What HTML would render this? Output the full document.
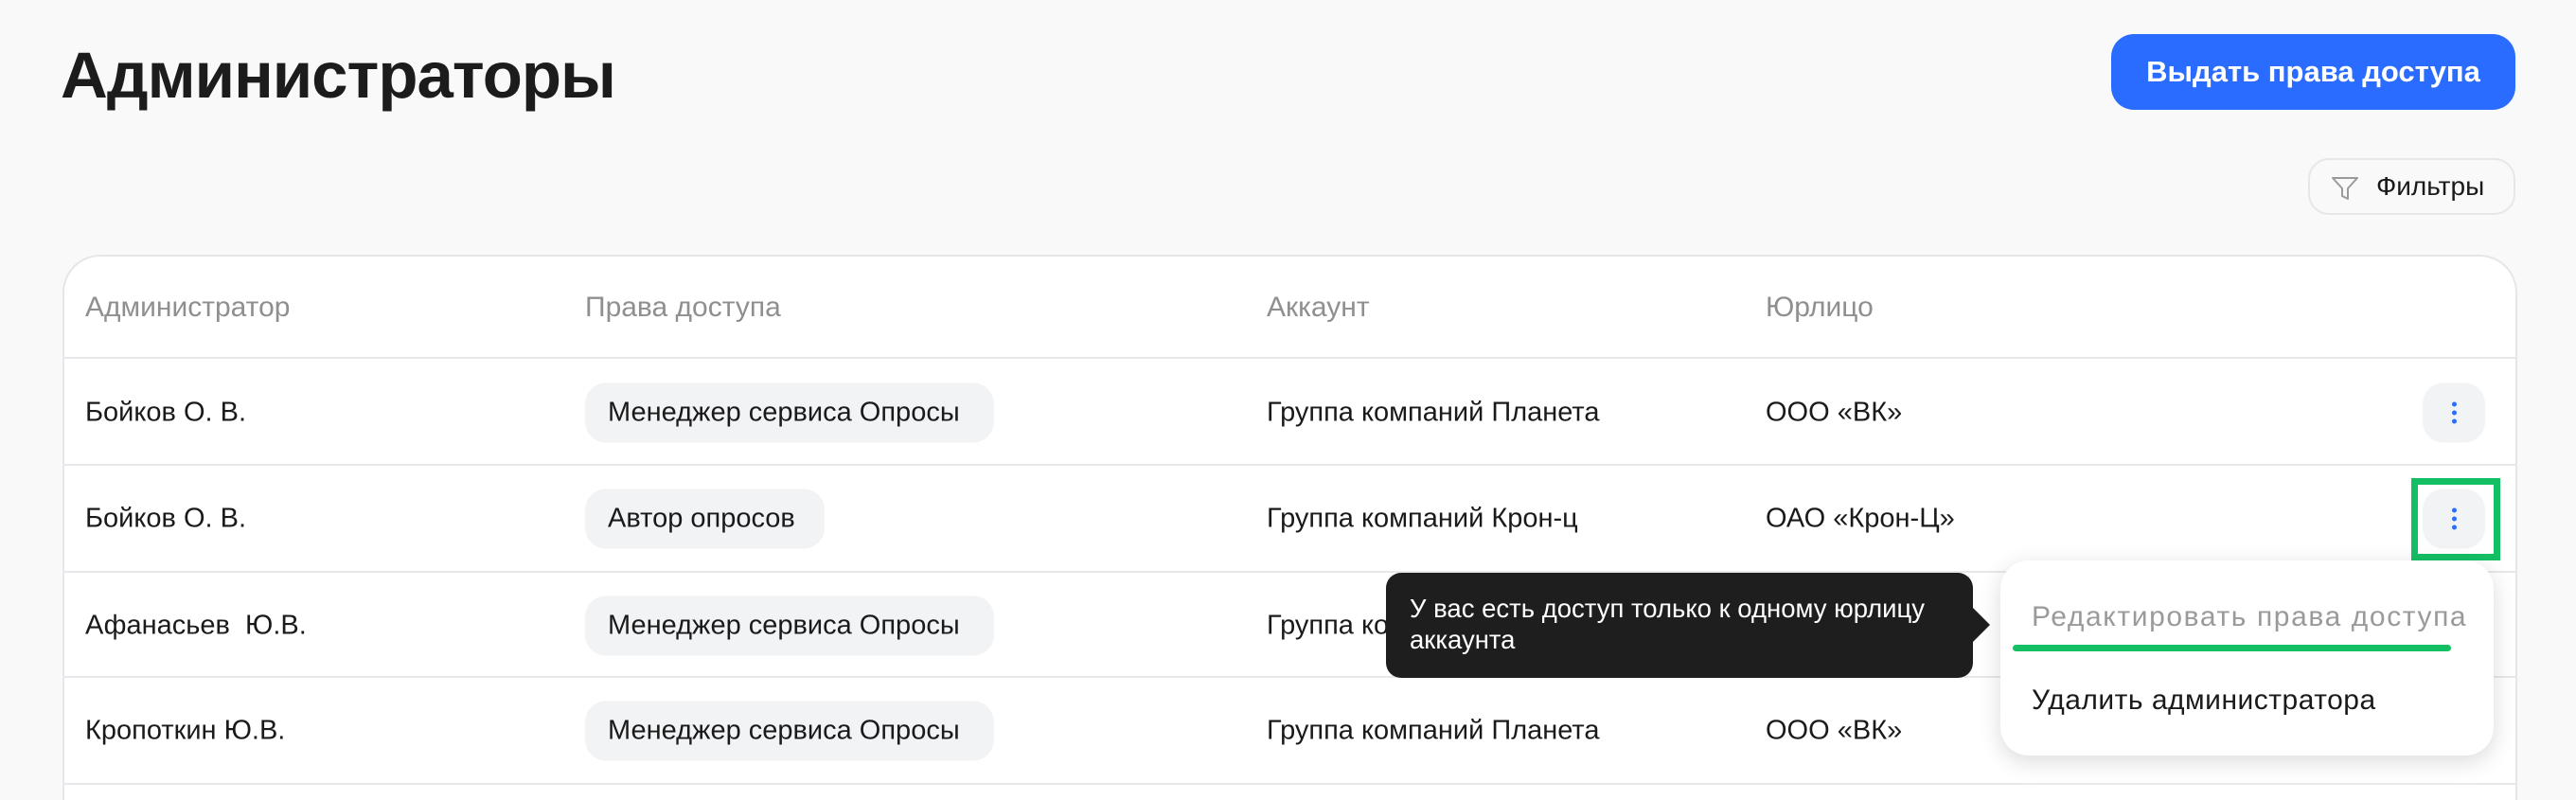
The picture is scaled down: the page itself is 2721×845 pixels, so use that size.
<!DOCTYPE html>
<html style="width:2721px;height:845px;overflow:hidden"><head><meta charset="utf-8"><style>
*{box-sizing:border-box;margin:0;padding:0}
body{width:2721px;height:845px;overflow:hidden;background:#f9f9f9;font-family:"Liberation Sans",sans-serif;color:#1a1a1a;position:relative}
.abs{position:absolute}
h1{position:absolute;left:64px;top:40px;font-size:69px;font-weight:bold;letter-spacing:-1px;color:#1c1c1c}
.btn{left:2230px;top:36px;width:427px;height:80px;background:#2a6cff;border-radius:24px;color:#fff;font-weight:bold;font-size:31px;display:flex;align-items:center;justify-content:center}
.filt{left:2438px;top:167px;width:219px;height:60px;border:2px solid #e6e7ea;border-radius:22px;display:flex;align-items:center;font-size:28px}
.table{left:66px;top:269px;width:2593px;height:576px;background:#fff;border:2px solid #e4e6ea;border-bottom:none;border-radius:40px 40px 0 0}
.line{left:66px;width:2593px;height:2px;background:#e6e8ec}
.t{position:absolute;font-size:29px;transform:translateY(-50%);white-space:nowrap}
.h{color:#8f8f8f;font-size:30px}
.chip{position:absolute;height:63px;background:#f2f3f5;border-radius:22px;font-size:29px;display:flex;align-items:center;padding-left:24px;transform:translateY(-50%);white-space:nowrap}
.more{position:absolute;left:2559px;width:66px;height:63px;background:#f2f3f5;border-radius:22px;transform:translateY(-50%)}
.dot{position:absolute;left:31px;width:5px;height:5px;border-radius:50%;background:#2a6cff}
</style></head><body>
<h1>Администраторы</h1>
<div class="abs btn">Выдать права доступа</div>
<div class="abs filt"><svg class="abs" style="left:22px;top:16px" width="30" height="28" viewBox="0 0 30 28"><path d="M2 3H28L18 14V25L12 22V14Z" fill="none" stroke="#9a9a9a" stroke-width="2" stroke-linejoin="round"/></svg><span style="margin-left:70px">Фильтры</span></div>
<div class="abs table"></div>
<div class="abs line" style="top:377px"></div>
<div class="abs line" style="top:490px"></div>
<div class="abs line" style="top:603px"></div>
<div class="abs line" style="top:714px"></div>
<div class="abs line" style="top:827px"></div>

<div class="t h" style="left:90px;top:325px">Администратор</div>
<div class="t h" style="left:618px;top:325px">Права доступа</div>
<div class="t h" style="left:1338px;top:325px">Аккаунт</div>
<div class="t h" style="left:1865px;top:325px">Юрлицо</div>

<div class="t" style="left:90px;top:436px">Бойков О. В.</div>
<div class="chip" style="left:618px;top:436px;width:432px">Менеджер сервиса Опросы</div>
<div class="t" style="left:1338px;top:436px">Группа компаний Планета</div>
<div class="t" style="left:1865px;top:436px">ООО «ВК»</div>
<div class="more" style="top:436px"><div class="dot" style="top:20px"></div><div class="dot" style="top:29px"></div><div class="dot" style="top:38px"></div></div>

<div class="t" style="left:90px;top:548px">Бойков О. В.</div>
<div class="chip" style="left:618px;top:548px;width:253px">Автор опросов</div>
<div class="t" style="left:1338px;top:548px">Группа компаний Крон-ц</div>
<div class="t" style="left:1865px;top:548px">ОАО «Крон-Ц»</div>
<div class="more" style="top:548px"><div class="dot" style="top:20px"></div><div class="dot" style="top:29px"></div><div class="dot" style="top:38px"></div></div>
<div class="abs" style="left:2547px;top:505px;width:94px;height:87px;border:7px solid #14bf64"></div>

<div class="t" style="left:90px;top:661px">Афанасьев &nbsp;Ю.В.</div>
<div class="chip" style="left:618px;top:661px;width:432px">Менеджер сервиса Опросы</div>
<div class="t" style="left:1338px;top:661px">Группа компаний</div>

<div class="t" style="left:90px;top:772px">Кропоткин Ю.В.</div>
<div class="chip" style="left:618px;top:772px;width:432px">Менеджер сервиса Опросы</div>
<div class="t" style="left:1338px;top:772px">Группа компаний Планета</div>
<div class="t" style="left:1865px;top:772px">ООО «ВК»</div>

<div class="abs" style="left:1464px;top:605px;width:620px;height:111px;background:#1e1e1f;border-radius:16px;color:#fff;font-size:27.5px;line-height:33px;padding:21px 0 0 25px;white-space:nowrap">У вас есть доступ только к одному юрлицу<br>аккаунта</div>
<svg class="abs" style="left:2082px;top:640px" width="22" height="40"><path d="M0 0L20 20L0 40Z" fill="#1e1e1f"/></svg>

<div class="abs" style="left:2113px;top:592px;width:521px;height:206px;background:#fff;border-radius:30px;box-shadow:0 6px 24px rgba(0,0,0,0.15)"></div>
<div class="t" style="left:2146px;top:652px;color:#9a9a9a;font-size:30px;letter-spacing:1.6px">Редактировать права доступа</div>
<div class="abs" style="left:2126px;top:681px;width:463px;height:7px;border-radius:4px;background:#14bf64"></div>
<div class="t" style="left:2146px;top:740px;font-size:30px;letter-spacing:0.5px">Удалить администратора</div>
</body></html>
